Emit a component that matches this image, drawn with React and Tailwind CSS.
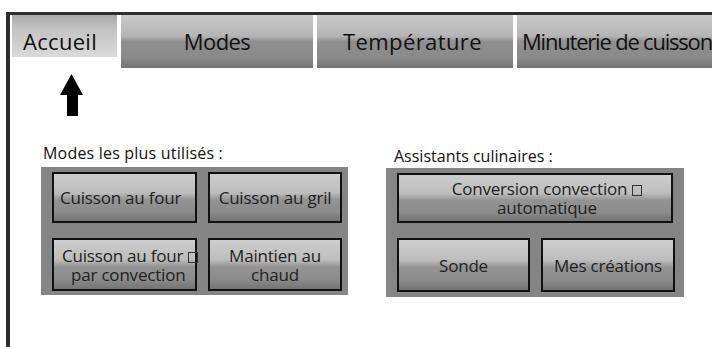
import React from "react";

const Box = () => (
 <span className="inline-block w-[10px] h-[11px] border border-[#333] align-[-1px] ml-[5px]" />
);

function Tab({ label, className, textClass }) {
 return (
  <div className={`shrink-0 ${className}`}>
   <div className={`pt-[12px] leading-[28px] text-[22px] text-[#111] whitespace-nowrap ${textClass}`}>
    {label}
   </div>
  </div>
 );
}

function Btn({ children, className }) {
 return (
  <div
   className={`border-2 border-[#111] bg-[linear-gradient(to_bottom,#cdcdcd_0%,#bdbdbd_40%,#939393_55%,#8c8c8c_80%,#747474_100%)] flex items-center justify-center text-center text-[17px] leading-[19px] tracking-[-0.2px] text-[#222] whitespace-nowrap ${className}`}
  >
   <div>{children}</div>
  </div>
 );
}

export default function App() {
 return (
  <div className="w-[712px] h-[347px] bg-white overflow-hidden pt-[12px] pl-[6px] font-['Open_Sans',sans-serif]">
   <div className="h-full border-l-[4px] border-t-[3px] border-[#2e2e2e] pl-[2px]">
    {/* tab bar */}
    <div className="flex items-start gap-[4px]">
     <Tab
      label="Accueil"
      className="w-[105px] h-[42px] bg-[linear-gradient(to_bottom,#aaaaaa_0%,#c4c4c4_35%,#cfcfcf_70%,#dadada_100%)]"
      textClass="pl-[11px] tracking-[0.3px]"
     />
     <Tab
      label="Modes"
      className="w-[192px] h-[53px] bg-[linear-gradient(to_bottom,#cacaca_0%,#b4b4b4_40%,#8f8f8f_50%,#8a8a8a_80%,#747474_100%)]"
      textClass="text-center tracking-[-0.6px]"
     />
     <Tab
      label="Température"
      className="w-[196px] h-[53px] bg-[linear-gradient(to_bottom,#cacaca_0%,#b4b4b4_40%,#8f8f8f_50%,#8a8a8a_80%,#747474_100%)]"
      textClass="pl-[26px] tracking-[0.4px]"
     />
     <Tab
      label="Minuterie de cuisson"
      className="flex-1 h-[53px] bg-[linear-gradient(to_bottom,#cacaca_0%,#b4b4b4_40%,#8f8f8f_50%,#8a8a8a_80%,#747474_100%)]"
      textClass="pl-[5px] tracking-[-1.2px]"
     />
    </div>

    {/* arrow */}
    <svg width="23" height="42" viewBox="0 0 23 42" className="ml-[48px] mt-[6px] block">
     <polygon points="11.5,0 0,21 7,21 7,42 18,42 18,21 23,21" fill="#000" />
    </svg>

    <div className="flex items-start">
     <div className="ml-[29px] mt-[27px]">
      <div className="h-[20px] leading-[20px] text-[16px] tracking-[0.2px] text-[#111] pl-[2px]">
       Modes les plus utilisés :
      </div>
      <div className="mt-[4px] w-[307px] h-[128px] bg-[#858585] pt-[5px] pl-[11px]">
       <div className="grid grid-cols-[145px_134px] grid-rows-[51px_53px] gap-x-[11px] gap-y-[15px]">
        <Btn className="justify-start">
         <div className="pl-[6px]">Cuisson au four</div>
        </Btn>
        <Btn>Cuisson au gril</Btn>
        <Btn className="justify-start">
         <div className="text-left pl-[8px]">
          Cuisson au four
          <Box />
          <br />
          <span className="pl-[9px]">par convection</span>
         </div>
        </Btn>
        <Btn>
         Maintien au
         <br />
         chaud
        </Btn>
       </div>
      </div>
     </div>

     <div className="ml-[38px] mt-[30px]">
      <div className="h-[20px] leading-[20px] text-[16px] text-[#111] pl-[8px]">
       Assistants culinaires :
      </div>
      <div className="mt-[2px] w-[298px] h-[129px] bg-[#858585] pt-[5px] pl-[11px]">
       <Btn className="w-[276px] h-[50px] pl-[24px]">
        Conversion convection
        <Box />
        <br />
        automatique
       </Btn>
       <div className="mt-[15px] flex gap-[11px]">
        <Btn className="w-[133px] h-[54px]">Sonde</Btn>
        <Btn className="w-[134px] h-[54px]">Mes créations</Btn>
       </div>
      </div>
     </div>
    </div>
   </div>
  </div>
 );
}
